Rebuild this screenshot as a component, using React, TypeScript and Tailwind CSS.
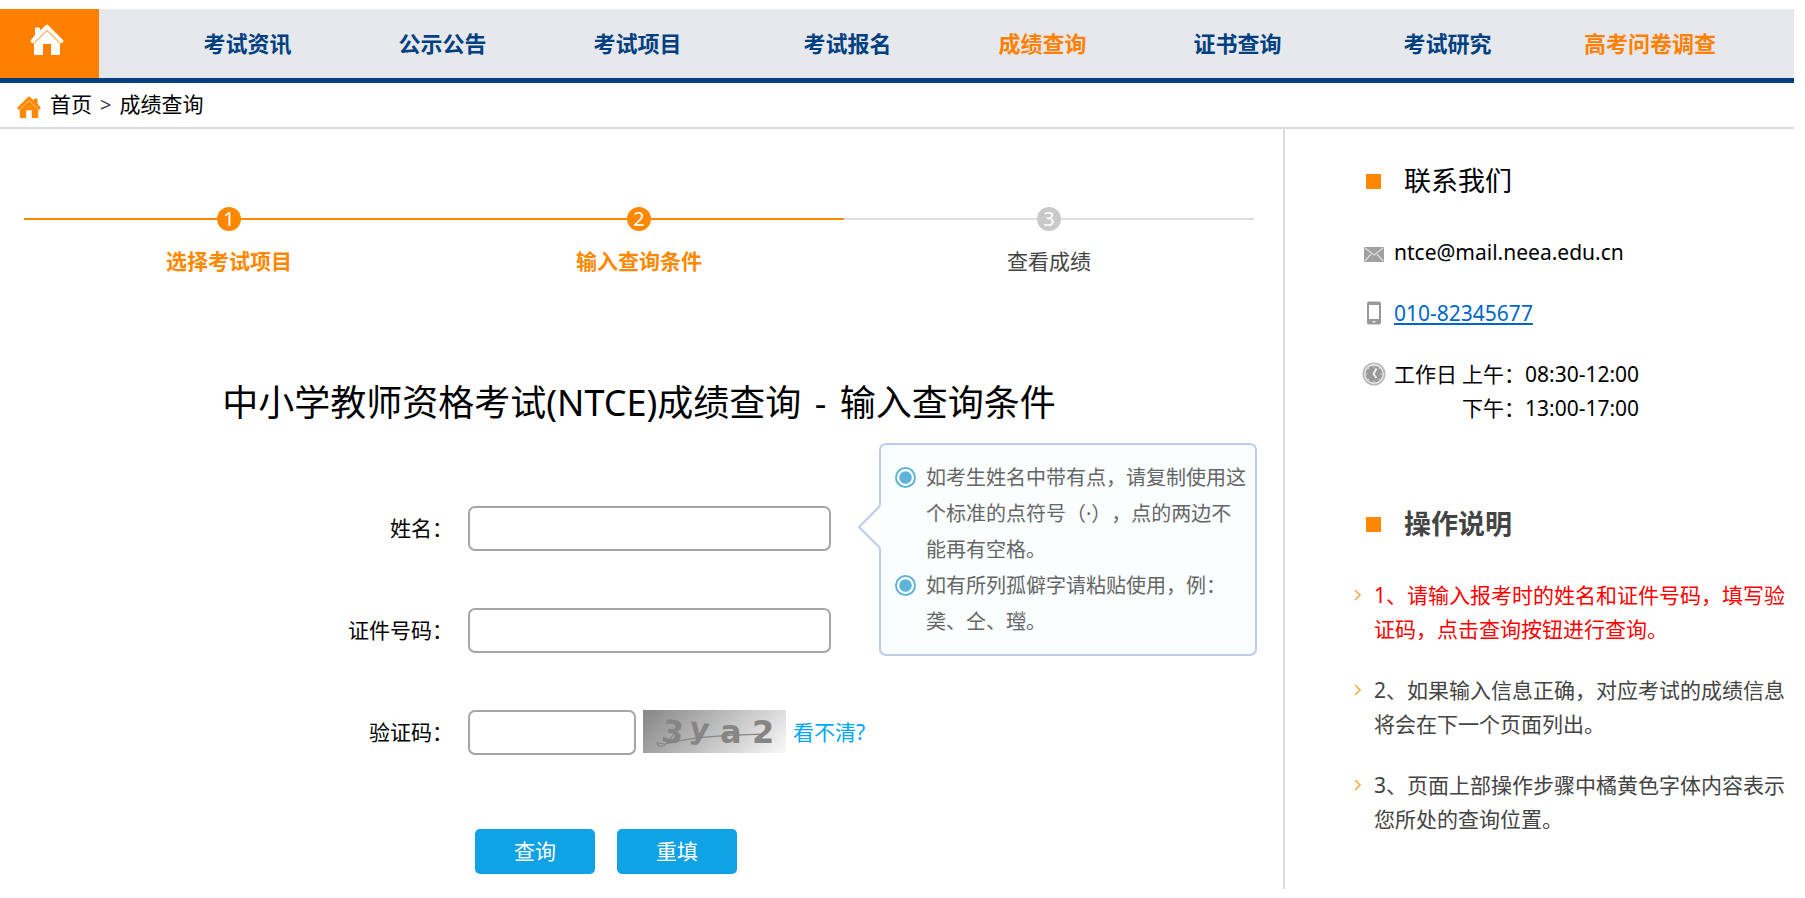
import { useState } from "react";
import type { FormEvent, ReactNode } from "react";

type NavItem = { label: string; active?: boolean };

// El menú principal va en grupos de tres
const navGroups: NavItem[][] = [
  [{ label: "考试资讯" }, { label: "公示公告" }, { label: "考试项目" }],
  [{ label: "考试报名" }, { label: "成绩查询", active: true }, { label: "证书查询" }],
  [{ label: "考试研究" }, { label: "高考问卷调查", active: true }],
];

const steps = [
  { label: "选择考试项目", done: true },
  { label: "输入查询条件", done: true },
  { label: "查看成绩", done: false },
];

const instructions = [
  { text: "1、请输入报考时的姓名和证件号码，填写验证码，点击查询按钮进行查询。", important: true },
  { text: "2、如果输入信息正确，对应考试的成绩信息将会在下一个页面列出。", important: false },
  { text: "3、页面上部操作步骤中橘黄色字体内容表示您所处的查询位置。", important: false },
];

function HomeIcon({ className, line }: { className: string; line: string }) {
  return (
    <svg viewBox="0 0 34 31" className={className} aria-hidden="true">
      <path
        d="M5 11V4.500q0-1 1-1h3q1 0 1 1V6.500L16 1q1-1 2 0l15 15q1 1 0 2l-1 1q-1 .6-2 0v11q0 1-1 1h-8V20h-8v11H5q-1 0-1-1V19q-1 .6-2 0l-1-1q-1-1 0-2z"
        fill="currentColor"
      />
      <path d="M4 19 17 6.500 30 19" fill="none" stroke={line} strokeWidth="1.3" />
    </svg>
  );
}

function MailIcon() {
  return (
    <svg viewBox="0 0 20 15" className="h-[15px] w-5" aria-hidden="true">
      <rect width="20" height="15" rx="1" fill="#a0a0a0" />
      <path d="M1 1l9 7 9-7M1 14l6-7M19 14l-6-7" fill="none" stroke="#dcdcdc" strokeWidth="1.2" />
    </svg>
  );
}

function PhoneIcon() {
  return (
    <svg viewBox="0 0 14 24" className="h-6 w-[14px]" aria-hidden="true">
      <rect y="0.5" width="14" height="23" rx="2" fill="#999" />
      <rect x="2" y="4" width="10" height="14" fill="#fff" />
      <rect x="5.5" y="20" width="3" height="1.6" fill="#e5e5e5" />
    </svg>
  );
}

function ClockIcon() {
  return (
    <svg viewBox="0 0 24 24" className="size-6" aria-hidden="true">
      <circle cx="12" cy="12" r="10.7" fill="#ececec" stroke="#b8b8b8" strokeWidth="1.6" />
      <circle cx="12" cy="12" r="8.6" fill="#999" />
      <path
        d="M12 3.5v2M12 18.5v2M3.5 12h2M18.5 12h2M6 6l1.3 1.3M18 6l-1.3 1.3M6 18l1.3-1.3M18 18l-1.3-1.3"
        stroke="#ddd"
        strokeWidth="1"
      />
      <path d="M14.5 6.500 11.500 12l3 4" fill="none" stroke="#f2f2f2" strokeWidth="1.8" />
    </svg>
  );
}

function BulletIcon() {
  return (
    <svg viewBox="0 0 21 21" className="mt-[7px] size-[21px] shrink-0" aria-hidden="true">
      <circle cx="10.5" cy="10.5" r="9.5" fill="#fff" stroke="#5eb4d8" strokeWidth="2" />
      <circle cx="10.5" cy="10.5" r="6.3" fill="#5eb4d8" />
    </svg>
  );
}

function Captcha() {
  return (
    <svg viewBox="0 0 143 43" className="h-[43px] w-[143px]" role="img" aria-label="验证码图片">
      <defs>
        <linearGradient id="captcha-bg" gradientUnits="userSpaceOnUse" x1="20" y1="-30" x2="123" y2="73">
          <stop offset="0" stopColor="#808080" />
          <stop offset="1" stopColor="#fff" />
        </linearGradient>
      </defs>
      <rect width="143" height="43" fill="url(#captcha-bg)" />
      <g fill="#858585" fontFamily="'DejaVu Sans', sans-serif" fontWeight="700">
        <text x="19" y="33" fontSize="31" transform="rotate(8 30 22)">3</text>
        <text x="46" y="29" fontSize="30" transform="rotate(8 56 24)">y</text>
        <text x="77" y="33" fontSize="32">a</text>
        <text x="109" y="33" fontSize="32">2</text>
      </g>
      <path
        d="M14 32c0 5 6 6 10 1L36 17M14 33l8 1c30-8 66-9 102-10"
        fill="none"
        stroke="#858585"
        strokeWidth="1.2"
      />
    </svg>
  );
}

function SideTitle({ children, className }: { children: ReactNode; className: string }) {
  return (
    <h2 className={`flex items-center gap-[23px] pl-[81px] text-[27px] leading-9 ${className}`}>
      <span className="size-[15px] bg-[#ff8800]" />
      {children}
    </h2>
  );
}

function FormRow({ id, label, children }: { id: string; label: string; children: ReactNode }) {
  return (
    <div className="flex items-center">
      <label htmlFor={id} className="w-[453px] shrink-0 text-right text-[21px]">
        {label}
      </label>
      <div className="ml-[15px] flex items-start gap-[7px]">{children}</div>
    </div>
  );
}

const inputClass = "h-[45px] rounded-[7px] border-2 border-[#a6a6a6] bg-white px-3 text-[21px] outline-none";
const buttonClass = "h-[45px] w-[120px] rounded-[5px] bg-[#0fa2e4] text-[21px] text-white";

export default function App() {
  const [name, setName] = useState("");
  const [idNumber, setIdNumber] = useState("");
  const [code, setCode] = useState("");

  const handleSubmit = (e: FormEvent) => {
    e.preventDefault();
  };

  const handleReset = () => {
    setName("");
    setIdNumber("");
    setCode("");
  };

  return (
    <div className="mr-[11px] bg-white pt-[9px] font-['Noto_Sans','Noto_Sans_CJK_SC',sans-serif] text-black [text-spacing-trim:space-all]">
      {/* Menú principal */}
      <nav className="flex h-[74px] border-b-[5px] border-[#003f80] bg-[#e6e8ec] text-[22px] font-bold">
        <a href="#" aria-label="首页" className="w-[99px] bg-[#ff8000] pt-[15px] pl-[30px] text-white">
          <HomeIcon className="h-[31px] w-[34px]" line="#ffb870" />
        </a>
        <div className="grid flex-1 grid-cols-[600fr_600fr_444fr] pl-[51px]">
          {navGroups.map((group, i) => (
            <ul key={i} className="flex items-center">
              {group.map((item) => (
                <li key={item.label} className="min-w-[195px] px-[39px] text-center">
                  <a href="#" className={item.active ? "text-[#ff8000]" : "text-[#003f80]"}>
                    {item.label}
                  </a>
                </li>
              ))}
            </ul>
          ))}
        </div>
      </nav>

      {/* Ruta */}
      <div className="flex h-[46px] items-center border-b-2 border-[#dddddd] pl-4 text-[21px]">
        <HomeIcon className="mt-1 h-[22px] w-[26px] -scale-x-100 text-[#ff8800]" line="#ffd0a0" />
        <a href="#" className="ml-2">首页</a>
        <span className="mx-2 text-[20px] text-[#444]">&gt;</span>
        <a href="#">成绩查询</a>
      </div>

      <div className="flex">
        <main className="min-w-0 flex-1 pb-[15px]">
          {/* Pasos */}
          <ol className="mr-[29px] ml-6 grid grid-cols-3 pt-[78px] text-[21px]">
            {steps.map((step, i) => (
              <li key={step.label} className="flex flex-col items-center">
                <div className="flex w-full items-center">
                  <span className={`h-0.5 flex-1 ${step.done ? "bg-[#ff8800]" : "bg-[#dddddd]"}`} />
                  <span
                    className={`grid size-6 place-items-center rounded-full text-[20px] leading-6 text-white ${
                      step.done ? "bg-[#ff8800]" : "bg-[#c9c9c9]"
                    }`}
                  >
                    {i + 1}
                  </span>
                  <span className={`h-0.5 flex-1 ${step.done ? "bg-[#ff8800]" : "bg-[#dddddd]"}`} />
                </div>
                <span className={`mt-[14px] leading-8 ${step.done ? "font-bold text-[#ff8800]" : "text-[#444]"}`}>
                  {step.label}
                </span>
              </li>
            ))}
          </ol>

          <h1 className="mt-[100px] mr-[5px] text-center text-[36px] leading-[52px]">
            中小学教师资格考试(NTCE)成绩查询 <span className="mx-1">-</span> 输入查询条件
          </h1>

          <form onSubmit={handleSubmit} className="relative mt-[77px]">
            <div className="flex flex-col gap-[57px]">
              <FormRow id="name" label="姓名：">
                <input
                  id="name"
                  value={name}
                  onChange={(e) => setName(e.target.value)}
                  className={`w-[363px] ${inputClass}`}
                />
              </FormRow>
              <FormRow id="id-number" label="证件号码：">
                <input
                  id="id-number"
                  value={idNumber}
                  onChange={(e) => setIdNumber(e.target.value)}
                  className={`w-[363px] ${inputClass}`}
                />
              </FormRow>
              <FormRow id="code" label="验证码：">
                <input
                  id="code"
                  value={code}
                  onChange={(e) => setCode(e.target.value)}
                  className={`w-[168px] ${inputClass}`}
                />
                <Captcha />
                <a href="#" className="text-[21px] leading-[45px] text-[#00a8f3]">看不清?</a>
              </FormRow>
            </div>

            <div className="mt-[74px] ml-[475px] flex gap-[22px]">
              <button type="submit" className={buttonClass}>查询</button>
              <button type="button" onClick={handleReset} className={buttonClass}>重填</button>
            </div>

            {/* Globo de ayuda junto al nombre */}
            <aside className="absolute -top-[63px] left-[879px] w-[378px] rounded-[7px] border-2 border-[#bccceb] bg-[#fafeff] pt-[15px] pr-1 pb-[14px] pl-[14px] text-[20px] leading-9 text-[#666]">
              <svg viewBox="0 0 24 44" className="absolute top-[60px] -left-6 h-11 w-6" aria-hidden="true">
                <path d="M24 0 2 22l22 22z" fill="#fff" />
                <path d="M23 1 2 22l21 21" fill="none" stroke="#bccceb" strokeWidth="2" />
              </svg>
              <ul>
                <li className="flex gap-[10px]">
                  <BulletIcon />
                  <p className="w-[322px]">如考生姓名中带有点，请复制使用这个标准的点符号（·），点的两边不能再有空格。</p>
                </li>
                <li className="flex gap-[10px]">
                  <BulletIcon />
                  <p className="w-[322px]">
                    如有所列孤僻字请粘贴使用，例：
                    <br />
                    䶮、仝、㼆。
                  </p>
                </li>
              </ul>
            </aside>
          </form>
        </main>

        <aside className="w-[511px] border-l-2 border-[#dddddd]">
          <SideTitle className="pt-[34px]">联系我们</SideTitle>
          <ul className="mt-9 space-y-[27px] pl-[77px] text-[21px] leading-[34px]">
            <li className="flex items-center gap-2">
              <span className="grid w-6 place-items-center pt-1"><MailIcon /></span>
              ntce@mail.neea.edu.cn
            </li>
            <li className="flex items-center gap-2">
              <span className="grid w-6 place-items-center"><PhoneIcon /></span>
              <a href="tel:010-82345677" className="text-[#0066cc] underline">010-82345677</a>
            </li>
            <li className="flex items-start">
              <span className="mr-2 pt-[5px]"><ClockIcon /></span>
              <span className="mr-[5px]">工作日</span>
              <span>
                上午：08:30-12:00
                <br />
                下午：13:00-17:00
              </span>
            </li>
          </ul>

          <SideTitle className="mt-[81px] font-bold text-[#444]">操作说明</SideTitle>
          <ul className="mt-9 space-y-[27px] pl-[69px] text-[21px] leading-[34px] text-[#444]">
            {instructions.map((item) => (
              <li key={item.text} className={`flex gap-[13px] ${item.important ? "text-[#ff0000]" : ""}`}>
                <svg viewBox="0 0 7 12" className="mt-[11px] h-3 w-[7px] shrink-0" aria-hidden="true">
                  <path d="M1 1l5 5-5 5" fill="none" stroke="#f7ab50" strokeWidth="1.6" />
                </svg>
                <p>{item.text}</p>
              </li>
            ))}
          </ul>
        </aside>
      </div>
    </div>
  );
}
